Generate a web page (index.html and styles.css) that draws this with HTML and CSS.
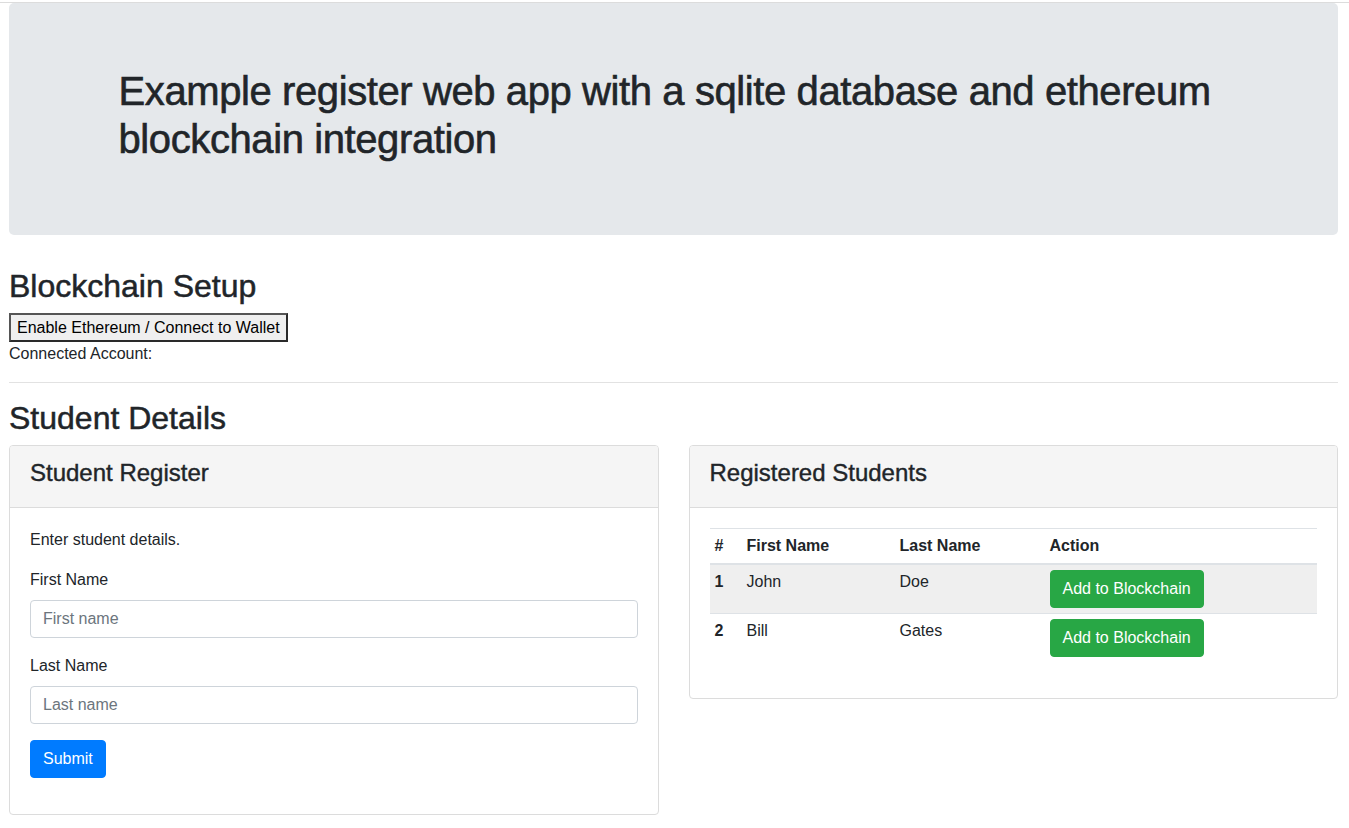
FILE: index.html
```html
<!DOCTYPE html>
<html lang="en">
<head>
<meta charset="utf-8">
<title>Student Register</title>
<link rel="stylesheet" href="styles.css">
</head>
<body>
<div class="topline"></div>
<div class="page">
  <div class="jumbotron">
    <div class="container">
      <h1 class="title">Example register web app with a sqlite database and ethereum blockchain integration</h1>
    </div>
  </div>

  <h2 class="section-title">Blockchain Setup</h2>
  <button class="native-btn" type="button">Enable Ethereum / Connect to Wallet</button>
  <div class="account">Connected Account: </div>
  <hr class="divider">

  <h2 class="section-title">Student Details</h2>
  <div class="cards">
    <div class="card">
      <div class="card-header"><h4 class="card-title">Student Register</h4></div>
      <div class="card-body">
        <p class="intro">Enter student details.</p>
        <form class="form">
          <div class="form-group">
            <label class="label">First Name</label>
            <input class="input" type="text" placeholder="First name">
          </div>
          <div class="form-group">
            <label class="label">Last Name</label>
            <input class="input" type="text" placeholder="Last name">
          </div>
          <button class="btn btn-primary" type="button">Submit</button>
        </form>
      </div>
    </div>

    <div class="card card-right">
      <div class="card-header"><h4 class="card-title">Registered Students</h4></div>
      <div class="card-body">
        <table class="table">
          <colgroup>
            <col class="col-num">
            <col class="col-first">
            <col class="col-last">
            <col class="col-action">
          </colgroup>
          <thead>
            <tr><th>#</th><th>First Name</th><th>Last Name</th><th>Action</th></tr>
          </thead>
          <tbody>
            <tr class="striped"><th>1</th><td>John</td><td>Doe</td><td><button class="btn btn-success" type="button">Add to Blockchain</button></td></tr>
            <tr><th>2</th><td>Bill</td><td>Gates</td><td><button class="btn btn-success" type="button">Add to Blockchain</button></td></tr>
          </tbody>
        </table>
      </div>
    </div>
  </div>
</div>
</body>
</html>
```

FILE: styles.css
```css
* { box-sizing: border-box; }

html, body {
  margin: 0;
  padding: 0;
  background: #fff;
}

body {
  font-family: "Liberation Sans", Arial, sans-serif;
  font-size: 16px;
  line-height: 1.5;
  color: #212529;
}

.topline {
  height: 3px;
  border-bottom: 1px solid #dcdcdc;
}

.page {
  padding: 0 11px 40px 9px;
}

.jumbotron {
  background: #e5e8eb;
  border-radius: 5px;
  padding: 64px 32px;
  margin-bottom: 32px;
}

.container {
  max-width: 1140px;
  margin: 0 auto;
  padding: 0 15px;
}

.title {
  margin: 0 0 8px;
  font-size: 40px;
  line-height: 48px;
  font-weight: 400;
  letter-spacing: -0.4px;
  -webkit-text-stroke: 0.6px #212529;
}

.section-title {
  margin: 0 0 8px;
  font-size: 32px;
  line-height: 38px;
  font-weight: 400;
  -webkit-text-stroke: 0.5px #212529;
}

.native-btn {
  display: block;
  margin: 1px 0 0;
  font-family: inherit;
  font-size: 16px;
  line-height: 19px;
  color: #000;
  background: #efefef;
  border: 2px solid #2a2a2a;
  border-left-color: #555;
  border-top-color: #555;
  padding: 3px 6px 3px;
  height: 29px;
  border-radius: 0;
}

.account {
  font-size: 16px;
  line-height: 24px;
}

.divider {
  margin: 16px 0;
  border: 0;
  border-top: 1px solid #e2e2e2;
  height: 0;
}

.cards {
  display: grid;
  grid-template-columns: 1fr 1fr;
  column-gap: 30px;
  align-items: start;
}

.card {
  border: 1px solid #dcdcdc;
  border-radius: 4px;
  background: #fff;
  overflow: hidden;
}

.card-header {
  background: #f5f5f5;
  border-bottom: 1px solid #dcdcdc;
  padding: 12px 20px;
}

.card-title {
  margin: 0 0 8px;
  font-size: 24px;
  line-height: 29px;
  font-weight: 400;
  -webkit-text-stroke: 0.4px #212529;
}

.card-body {
  padding: 20px;
}

.intro {
  margin: 0 0 16px;
}

.form {
  margin-bottom: 16px;
}

.form-group {
  margin-bottom: 16px;
}

.label {
  display: block;
  margin-bottom: 8px;
  line-height: 24px;
}

.input {
  display: block;
  width: 100%;
  height: 38px;
  padding: 6px 12px;
  font-family: inherit;
  font-size: 16px;
  color: #495057;
  border: 1px solid #ced4da;
  border-radius: 4px;
  background: #fff;
}

.input::placeholder {
  color: #6c757d;
  opacity: 1;
}

.btn {
  display: inline-block;
  height: 38px;
  padding: 6px 12px;
  font-family: inherit;
  font-size: 16px;
  line-height: 24px;
  color: #fff;
  border: 1px solid transparent;
  border-radius: 4px;
}

.btn-primary {
  background: #007bff;
  border-color: #007bff;
}

.btn-success {
  background: #28a745;
  border-color: #28a745;
}

.table {
  width: 100%;
  border-collapse: collapse;
  margin-bottom: 16px;
}

.col-num { width: 32px; }
.col-first { width: 153px; }
.col-last { width: 150px; }

.table th,
.table td {
  padding: 5px 5px;
  text-align: left;
  vertical-align: top;
  border-top: 1px solid #dee2e6;
  line-height: 24px;
}

.table th {
  font-weight: 700;
}

.table thead th {
  border-bottom: 2px solid #dee2e6;
  vertical-align: bottom;
}

.striped {
  background: #efefef;
}
```
